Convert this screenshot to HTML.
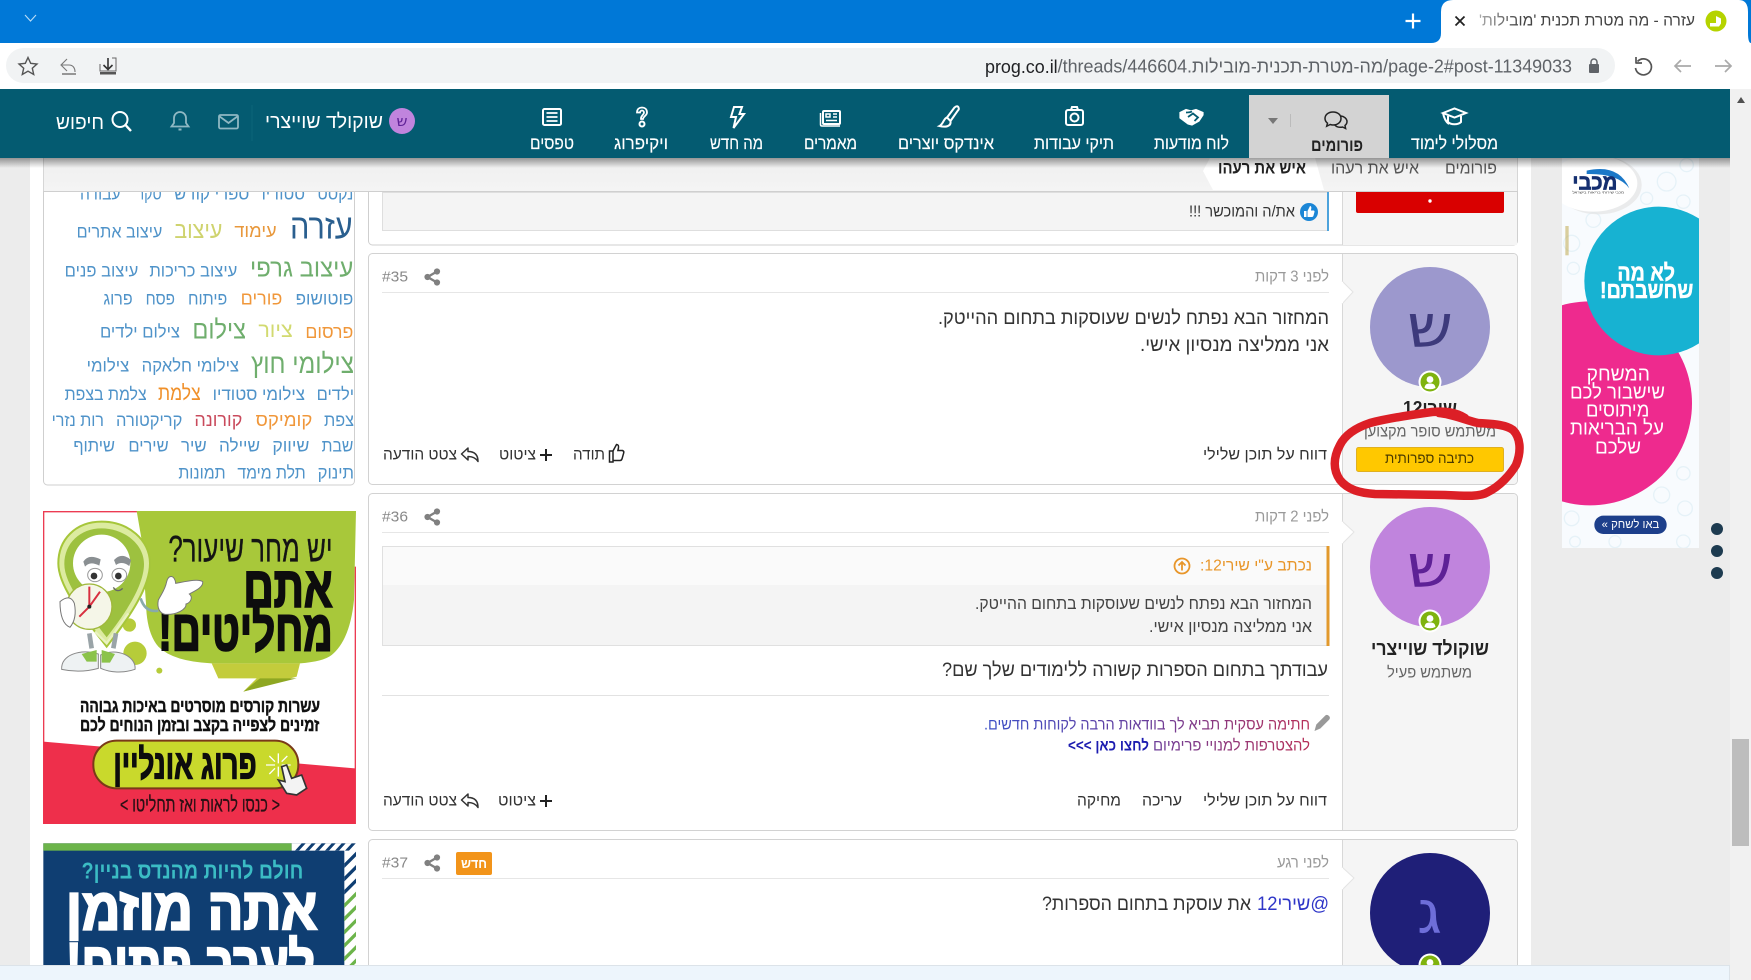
<!DOCTYPE html>
<html lang="he"><head><meta charset="utf-8"><title>עזרה - מה מטרת תכנית 'מובילות'</title>
<style>
html,body{margin:0;padding:0;width:1751px;height:980px;overflow:hidden;background:#ececec}
svg{display:block;position:absolute;left:0;top:0;filter:blur(.3px)}
text{font-family:"Liberation Sans","Noto Sans CJK JP",sans-serif;dominant-baseline:central;direction:rtl;unicode-bidi:embed}
text.l{direction:ltr}
text.d{font-family:"DejaVu Sans","Liberation Sans",sans-serif}
.tag text{fill:#4f93c9;font-size:52px}
.ac{font-size:16px;fill:#333}
</style></head><body>
<svg width="1751" height="980" viewBox="0 0 1751 980" xmlns="http://www.w3.org/2000/svg">
<defs>
<linearGradient id="sh" x1="0" y1="0" x2="0" y2="1"><stop offset="0" stop-color="#000" stop-opacity=".38"/><stop offset="1" stop-color="#000" stop-opacity="0"/></linearGradient>
<linearGradient id="sig" gradientUnits="userSpaceOnUse" x1="1310" y1="0" x2="984" y2="0"><stop offset="0" stop-color="#b83058"/><stop offset=".5" stop-color="#6a3f9c"/><stop offset="1" stop-color="#3c50c8"/></linearGradient>
<linearGradient id="bc" x1="0" y1="0" x2="0" y2="1"><stop offset="0" stop-color="#eeeeee"/><stop offset="1" stop-color="#f4f4f4"/></linearGradient>
<linearGradient id="fade" gradientUnits="userSpaceOnUse" x1="1695" y1="0" x2="1479" y2="0"><stop offset="0" stop-color="#444"/><stop offset=".8" stop-color="#444"/><stop offset="1" stop-color="#aaa"/></linearGradient>
<g id="share" fill="#808080" stroke="#808080"><circle cx="-4.500" cy="0" r="3.100" stroke="none"/><circle cx="5" cy="-5.500" r="3.100" stroke="none"/><circle cx="5" cy="5.500" r="3.100" stroke="none"/><path d="M-4.500 0L5-5.500M-4.500 0L5 5.500" stroke-width="2.400" fill="none"/></g>
<g id="online"><circle r="11.500" fill="#fff"/><circle r="9.500" fill="#7fb30f"/><circle cy="-2.500" r="3.400" fill="#fff"/><path d="M-5.500 6C-5 1.800-2.500 1.500 0 1.500S5 1.800 5.500 6Q0 8.500-5.500 6Z" fill="#fff"/></g>
<g id="reply" fill="none" stroke="#333" stroke-width="1.500" stroke-linejoin="round"><path d="M-8.500-1L-2-7V-3.500C4-3.500 8-1 8 6.500 5.500 2.500 2 1.500-2 1.500V5Z"/></g>
<g id="plus" stroke="#222" stroke-width="2"><path d="M-6 0H6M0-6V6"/></g>
<clipPath id="rightad"><rect x="1562" y="158" width="137" height="390"/></clipPath>
<clipPath id="ad2"><rect x="43" y="843" width="313" height="123"/></clipPath>
</defs>

<!-- page -->
<rect width="1751" height="980" fill="#ececec"/>
<rect x="30" y="150" width="1501" height="830" fill="#fff"/>

<!-- tag box -->
<rect x="43.500" y="150" width="311" height="335" rx="4" fill="#fff" stroke="#cfcfcf"/>
<g class="tag" transform="translate(30,160) scale(.33333)">
<text x="970" y="100" textLength="108" lengthAdjust="spacingAndGlyphs">נקסט</text>
<text x="825" y="100" textLength="130" lengthAdjust="spacingAndGlyphs">סטודיו</text>
<text x="658" y="100" textLength="226" lengthAdjust="spacingAndGlyphs">ספרי קודש</text>
<text x="395" y="100" textLength="75" lengthAdjust="spacingAndGlyphs">סקר</text>
<text x="272" y="100" textLength="122" lengthAdjust="spacingAndGlyphs">עבודה</text>

<text x="968" y="202" textLength="188" lengthAdjust="spacingAndGlyphs" style="font-size:104px;fill:#2a5f8f">עזרה</text>
<text x="740" y="212" textLength="127" lengthAdjust="spacingAndGlyphs" style="font-size:56px;fill:#e8983c">עימוד</text>
<text x="577" y="210" textLength="144" lengthAdjust="spacingAndGlyphs" style="font-size:70px;fill:#cfd36e">עיצוב</text>
<text x="397" y="214" textLength="257" lengthAdjust="spacingAndGlyphs">עיצוב אתרים</text>

<text x="970" y="326" textLength="310" lengthAdjust="spacingAndGlyphs" style="font-size:76px;fill:#6fae6d">עיצוב גרפי</text>
<text x="622" y="332" textLength="264" lengthAdjust="spacingAndGlyphs">עיצוב כריכות</text>
<text x="325" y="332" textLength="221" lengthAdjust="spacingAndGlyphs">עיצוב פנים</text>

<text x="970" y="416" textLength="173" lengthAdjust="spacingAndGlyphs">פוטושופ</text>
<text x="757" y="414" textLength="125" lengthAdjust="spacingAndGlyphs" style="font-size:56px;fill:#f0973a">פורים</text>
<text x="592" y="416" textLength="118" lengthAdjust="spacingAndGlyphs">פיתוח</text>
<text x="435" y="416" textLength="88" lengthAdjust="spacingAndGlyphs">פסח</text>
<text x="308" y="416" textLength="88" lengthAdjust="spacingAndGlyphs">פרוג</text>

<text x="970" y="514" textLength="144" lengthAdjust="spacingAndGlyphs" style="font-size:56px;fill:#f0973a">פרסום</text>
<text x="788" y="512" textLength="103" lengthAdjust="spacingAndGlyphs" style="font-size:62px;fill:#d2da70">ציור</text>
<text x="648" y="508" textLength="161" lengthAdjust="spacingAndGlyphs" style="font-size:78px;fill:#6fae6d">צילום</text>
<text x="450" y="514" textLength="240" lengthAdjust="spacingAndGlyphs">צילום ילדים</text>

<text x="972" y="610" textLength="309" lengthAdjust="spacingAndGlyphs" style="font-size:82px;fill:#6fae6d">צילומי חוץ</text>
<text x="627" y="616" textLength="292" lengthAdjust="spacingAndGlyphs">צילומי חלאקה</text>
<text x="298" y="616" textLength="128" lengthAdjust="spacingAndGlyphs">צילומי</text>

<text x="972" y="702" textLength="112" lengthAdjust="spacingAndGlyphs">ילדים</text>
<text x="825" y="702" textLength="277" lengthAdjust="spacingAndGlyphs">צילומי סטודיו</text>
<text x="512" y="700" textLength="128" lengthAdjust="spacingAndGlyphs" style="font-size:62px;fill:#f0902a">צלמת</text>
<text x="350" y="702" textLength="246" lengthAdjust="spacingAndGlyphs">צלמת בצפת</text>

<text x="972" y="780" textLength="90" lengthAdjust="spacingAndGlyphs">צפת</text>
<text x="847" y="778" textLength="170" lengthAdjust="spacingAndGlyphs" style="font-size:56px;fill:#f0973a">קומיקס</text>
<text x="637" y="778" textLength="144" lengthAdjust="spacingAndGlyphs" style="font-size:56px;fill:#c94a5c">קורונה</text>
<text x="457" y="780" textLength="199" lengthAdjust="spacingAndGlyphs">קריקטורה</text>
<text x="222" y="780" textLength="157" lengthAdjust="spacingAndGlyphs">רות נזרי</text>

<text x="970" y="856" textLength="95" lengthAdjust="spacingAndGlyphs">שבת</text>
<text x="838" y="856" textLength="111" lengthAdjust="spacingAndGlyphs">שיווק</text>
<text x="690" y="856" textLength="123" lengthAdjust="spacingAndGlyphs">שיילה</text>
<text x="530" y="856" textLength="77" lengthAdjust="spacingAndGlyphs">שיר</text>
<text x="416" y="856" textLength="121" lengthAdjust="spacingAndGlyphs">שירים</text>
<text x="255" y="856" textLength="125" lengthAdjust="spacingAndGlyphs">שיתוף</text>

<text x="972" y="938" textLength="109" lengthAdjust="spacingAndGlyphs">תינוק</text>
<text x="827" y="938" textLength="205" lengthAdjust="spacingAndGlyphs">תלת מימד</text>
<text x="587" y="938" textLength="142" lengthAdjust="spacingAndGlyphs">תמונות</text>
</g>

<!-- Ad 1 -->
<g transform="translate(30,500) scale(.33333)">
<rect x="40" y="33" width="938" height="939" fill="#fff"/>
<path d="M41 972V35H330M976 200V972" fill="none" stroke="#ec3b52" stroke-width="4"/>
<circle cx="315" cy="460" r="35" fill="#b6cc3a"/><circle cx="298" cy="375" r="20" fill="#b6cc3a"/><circle cx="388" cy="512" r="9" fill="#b6cc3a"/>
<path d="M320 33H978L972 300Q960 420 905 465 880 485 810 490L545 490Q430 485 385 440 350 400 348 310 345 270 335 120Z" fill="#a8c83a"/>
<path d="M545 490L810 490 800 530 640 575 680 535 565 535Z" fill="#c3cc3c"/>
<path d="M640 575L690 535H800Z" fill="#8ea722"/>
<text x="908" y="145" textLength="493" lengthAdjust="spacingAndGlyphs" font-size="112" fill="#141414" stroke="#141414" stroke-width="1">יש מחר שיעור?</text>
<text x="908" y="262" textLength="268" lengthAdjust="spacingAndGlyphs" font-size="172" font-weight="700" fill="#0d0d0d" stroke="#0d0d0d" stroke-width="6">אתם</text>
<text x="908" y="393" textLength="523" lengthAdjust="spacingAndGlyphs" font-size="172" font-weight="700" fill="#0d0d0d" stroke="#0d0d0d" stroke-width="6">מחליטים!</text>
<!-- pin character -->
<path d="M215 65C135 65 85 120 85 190 85 260 160 350 230 440 300 350 360 260 360 190 360 120 295 65 215 65Z" fill="#dcebA0" stroke="#a6c63a" stroke-width="6"/>
<path d="M215 85C150 85 103 130 103 192 103 255 172 335 230 412 290 335 342 255 342 192 342 130 280 85 215 85Z" fill="#9dc13f"/>
<circle cx="215" cy="190" r="86" fill="#fff"/>
<path d="M195 395L230 430 295 340" fill="none" stroke="#e9f2c0" stroke-width="7"/>
<path d="M160 185Q175 160 212 178L208 197Q180 182 165 200Z" fill="#8a8f92"/><path d="M252 180Q275 155 303 180L298 198Q275 182 258 195Z" fill="#8a8f92"/>
<ellipse cx="195" cy="225" rx="22" ry="20" fill="#fff" stroke="#999" stroke-width="3"/><ellipse cx="268" cy="225" rx="22" ry="20" fill="#fff" stroke="#999" stroke-width="3"/>
<circle cx="192" cy="228" r="10" fill="#333"/><circle cx="265" cy="228" r="10" fill="#333"/>
<path d="M250 262Q262 280 278 265" fill="none" stroke="#666" stroke-width="4"/>
<circle cx="178" cy="320" r="68" fill="#f5f6e8" stroke="#a0b83c" stroke-width="4"/>
<path d="M178 320V260M178 320L148 350M178 320L210 275" stroke="#d83040" stroke-width="6" fill="none"/><circle cx="178" cy="320" r="6" fill="#222"/>
<path d="M90 305Q120 280 133 310 142 355 120 382 90 370 90 305Z" fill="#fff" stroke="#777" stroke-width="3"/>
<path d="M178 400L185 445M258 400L250 445" stroke="#9aa4a8" stroke-width="14"/>
<path d="M95 508C92 465 150 445 205 462V505Q150 520 95 508Z" fill="#eef2f3" stroke="#888" stroke-width="3"/>
<path d="M212 465C260 440 320 470 315 508 280 520 240 518 212 505Z" fill="#eef2f3" stroke="#888" stroke-width="3"/>
<path d="M155 462L200 450V485H170ZM215 450L255 462 240 488H215Z" fill="#8bc34a"/>
<path d="M332 295Q345 338 385 332" fill="none" stroke="#8aa" stroke-width="8"/>
<path d="M385 300C395 280 405 270 410 245 415 222 435 225 437 250 465 245 505 235 518 245 522 262 490 275 478 282 490 292 482 308 468 312 470 328 440 345 405 343 390 340 380 325 385 300Z" fill="#fff" stroke="#777" stroke-width="3"/>
<text x="870" y="618" textLength="720" lengthAdjust="spacingAndGlyphs" font-size="54" font-weight="700" fill="#111" stroke="#111" stroke-width="1.500">עשרות קורסים מוסרטים באיכות גבוהה</text>
<text x="868" y="675" textLength="718" lengthAdjust="spacingAndGlyphs" font-size="54" font-weight="700" fill="#111" stroke="#111" stroke-width="1.500">זמינים לצפייה בקצב ובזמן הנוחים לכם</text>
<path d="M40 725L975 805V972H40Z" fill="#ee2f4b"/>
<rect x="190" y="722" width="615" height="143" rx="70" fill="#c9d92c" stroke="#7a3a18" stroke-width="6"/>
<text x="680" y="793" textLength="430" lengthAdjust="spacingAndGlyphs" font-size="124" font-weight="700" fill="#0d0d0d" stroke="#0d0d0d" stroke-width="4">פרוג אונליין</text>
<path d="M745 790V760M745 800V830M735 795H708M755 795H782M735 785L718 768M755 785L772 768M735 805L718 822" stroke="#fff" stroke-width="4"/>
<path d="M755 800L770 795 785 835 815 825 830 865 800 885 770 880 745 840 765 845Z" fill="#f3f3f3" stroke="#333" stroke-width="5"/>
<text x="750" y="915" textLength="480" lengthAdjust="spacingAndGlyphs" font-size="62" fill="#2a1014" stroke="#2a1014" stroke-width="1">&lt; כנסו לראות ואז תחליטו &gt;</text>
</g>

<!-- Ad 2 -->
<g clip-path="url(#ad2)">
<g transform="translate(30,500) scale(.33333)">
<rect x="40" y="1030" width="938" height="400" fill="#0f3e72"/>
<rect x="40" y="1030" width="745" height="22" fill="#6cb44a"/>
<rect x="785" y="1030" width="193" height="22" fill="#fff"/>
<rect x="943" y="1030" width="35" height="400" fill="#fff"/>
<path d="M795 1052l20-22h12l-20 22zM825 1052l20-22h12l-20 22zM855 1052l20-22h12l-20 22zM885 1052l20-22h12l-20 22zM915 1052l20-22h12l-20 22zM945 1052l20-22h12l-20 22z" fill="#0f3e72"/>
<path d="M943 1090l35-35v14l-35 35zM943 1130l35-35v14l-35 35zM943 1170l35-35v14l-35 35z" fill="#0f3e72"/>
<path d="M943 1210l35-35v14l-35 35zM943 1250l35-35v14l-35 35zM943 1290l35-35v14l-35 35zM943 1330l35-35v14l-35 35zM943 1370l35-35v14l-35 35zM943 1410l35-35v14l-35 35z" fill="#6cb44a"/>
<text x="820" y="1112" textLength="665" lengthAdjust="spacingAndGlyphs" font-size="70" font-weight="700" fill="#3bbcc4">חולם להיות מהנדס בניין?</text>
<text x="862" y="1228" textLength="754" lengthAdjust="spacingAndGlyphs" font-size="176" font-weight="700" fill="#fff" stroke="#fff" stroke-width="7">אתה מוזמן</text>
<text x="855" y="1392" textLength="747" lengthAdjust="spacingAndGlyphs" font-size="176" font-weight="700" fill="#fff" stroke="#fff" stroke-width="7">לערב פתוח!</text>
</g></g>

<!-- Post 34 -->
<rect x="368.500" y="150" width="1149" height="95" rx="4" fill="#fff" stroke="#cfcfcf"/>
<rect x="1342" y="151" width="175" height="94" fill="#f5f5f5"/><path d="M1342.500 151V245" stroke="#d8d8d8"/>
<rect x="382.500" y="192.500" width="945" height="38" fill="#f4f4f4" stroke="#dedede"/>
<rect x="1327" y="192" width="2" height="39" fill="#4da3dc"/>
<circle cx="1309" cy="212" r="9" fill="#1b86d6"/><path d="M1304 211h2.500v6h-2.500zM1307.500 211l2.500-5q1.800.3 1.200 3l-.3 1.500h2.800q1.200.5.700 1.800l-1 3.700q-.4 1-1.500 1h-4.400z" fill="#fff"/>
<text x="1295" y="212" textLength="106" lengthAdjust="spacingAndGlyphs" font-size="15.500" fill="#333">את/ה והמוכשר !!!</text>
<rect x="1356" y="180" width="148" height="33" rx="2" fill="#d90000"/><circle cx="1430" cy="201" r="1.700" fill="#fff"/>

<!-- Post 35 -->
<rect x="368.500" y="253.500" width="1149" height="231" rx="4" fill="#fff" stroke="#d2d2d2"/>
<path d="M1342 254H1513a4 4 0 0 1 4 4V480a4 4 0 0 1-4 4H1342Z" fill="#f5f5f5"/><path d="M1342.500 254V484" stroke="#d8d8d8"/>
<path d="M1342 281L1353 292 1342 304" fill="#fff" stroke="#e4e4e4"/><path d="M1341 282H1343V303H1341Z" fill="#fff"/>
<text class="l" x="382" y="277" textLength="26" lengthAdjust="spacingAndGlyphs" font-size="15" fill="#888">#35</text>
<use href="#share" x="432" y="277"/>
<text x="1329" y="277" textLength="74" lengthAdjust="spacingAndGlyphs" font-size="15.500" fill="#999">לפני 3 דקות</text>
<path d="M382 292.500H1329" stroke="#e6e6e6"/>
<text x="1329" y="318" textLength="391" lengthAdjust="spacingAndGlyphs" font-size="19.500" fill="#333">המחזור הבא נפתח לנשים שעוסקות בתחום ההייטק.</text>
<text x="1329" y="345" textLength="189" lengthAdjust="spacingAndGlyphs" font-size="19.500" fill="#333">אני ממליצה מנסיון אישי.</text>
<text class="ac" x="1327" y="455" textLength="124" lengthAdjust="spacingAndGlyphs">דווח על תוכן שלילי</text>
<g transform="translate(0,2.500)"><path d="M609.500 448.500h3.500v11h-3.500zM613 448.500l3.500-6.500q2.500.2 2 3.200l-.6 2.800h4.600q1.700.7 1.200 2.400l-1.700 6q-.5 1.600-2 1.600h-7z" fill="none" stroke="#222" stroke-width="1.500"/></g>
<text class="ac" x="605" y="455" textLength="32" lengthAdjust="spacingAndGlyphs">תודה</text>
<use href="#plus" x="546" y="455"/>
<text class="ac" x="536" y="455" textLength="37" lengthAdjust="spacingAndGlyphs">ציטוט</text>
<use href="#reply" x="470" y="455"/>
<text class="ac" x="457" y="455" textLength="74" lengthAdjust="spacingAndGlyphs">צטט הודעה</text>
<circle cx="1430" cy="327" r="60" fill="#9c98cd"/>
<text class="d" x="1453" y="327" textLength="46" lengthAdjust="spacingAndGlyphs" font-size="60" fill="#3d3a7c">ש</text>
<use href="#online" x="1430" y="382"/>
<text x="1457" y="408" textLength="54" lengthAdjust="spacingAndGlyphs" font-size="18" font-weight="700" fill="#222">שירי12</text>
<text x="1496" y="432" textLength="132" lengthAdjust="spacingAndGlyphs" font-size="16" fill="#666">משתמש סופר מקצוען</text>
<rect x="1356.500" y="447.500" width="147" height="24" rx="2" fill="#ffc800" stroke="#e0b020"/>
<text x="1474" y="459" textLength="89" lengthAdjust="spacingAndGlyphs" font-size="14.500" fill="#4a3a00">כתיבה ספרותית</text>

<!-- Post 36 -->
<rect x="368.500" y="493.500" width="1149" height="337" rx="4" fill="#fff" stroke="#d2d2d2"/>
<path d="M1342 494H1513a4 4 0 0 1 4 4V826a4 4 0 0 1-4 4H1342Z" fill="#f5f5f5"/><path d="M1342.500 494V830" stroke="#d8d8d8"/>
<path d="M1342 521L1354 532 1342 544" fill="#fff" stroke="#e4e4e4"/><path d="M1341 522H1343V543H1341Z" fill="#fff"/>
<text class="l" x="382" y="517" textLength="26" lengthAdjust="spacingAndGlyphs" font-size="15" fill="#888">#36</text>
<use href="#share" x="432" y="517"/>
<text x="1329" y="517" textLength="74" lengthAdjust="spacingAndGlyphs" font-size="15.500" fill="#999">לפני 2 דקות</text>
<path d="M382 532.500H1329" stroke="#e6e6e6"/>
<rect x="382.500" y="546.500" width="945" height="99" fill="#f4f4f4" stroke="#e0e0e0"/>
<rect x="383" y="547" width="944" height="38" fill="#fafafa"/>
<rect x="1326.500" y="546" width="3" height="100" fill="#e2992c"/>
<text x="1312" y="566" textLength="112" lengthAdjust="spacingAndGlyphs" font-size="16" fill="#e8962a">נכתב ע"י שירי12:</text>
<circle cx="1182" cy="566" r="7.500" fill="none" stroke="#e8962a" stroke-width="1.800"/><path d="M1182 570.500V562M1178.500 565.500L1182 562 1185.500 565.500" fill="none" stroke="#e8962a" stroke-width="1.800"/>
<text x="1312" y="604" textLength="337" lengthAdjust="spacingAndGlyphs" font-size="16.500" fill="#444">המחזור הבא נפתח לנשים שעוסקות בתחום ההייטק.</text>
<text x="1312" y="627" textLength="163" lengthAdjust="spacingAndGlyphs" font-size="16.500" fill="#444">אני ממליצה מנסיון אישי.</text>
<text x="1328" y="670" textLength="386" lengthAdjust="spacingAndGlyphs" font-size="19.500" fill="#333">עבודתך בתחום הספרות קשורה ללימודים שלך שם?</text>
<path d="M382 695.500H1329" stroke="#e2e2e2"/>
<path d="M1314.500 731l1.800-6.500 9-9q1.800-1.300 3.600.4t.4 3.600l-9 9z" fill="#999"/>
<text x="1310" y="725" textLength="326" lengthAdjust="spacingAndGlyphs" font-size="15.500" fill="url(#sig)">חתימה עסקית תביא לך בוודאות הרבה לקוחות חדשים.</text>
<text x="1310" y="746" textLength="157" lengthAdjust="spacingAndGlyphs" font-size="15.500" fill="url(#sig)">להצטרפות למנויי פרימיום</text>
<text x="1149" y="746" textLength="81" lengthAdjust="spacingAndGlyphs" font-size="15.500" font-weight="700" fill="#1c1cb0">לחצו כאן &gt;&gt;&gt;</text>
<text class="ac" x="1327" y="801" textLength="124" lengthAdjust="spacingAndGlyphs">דווח על תוכן שלילי</text>
<text class="ac" x="1182" y="801" textLength="40" lengthAdjust="spacingAndGlyphs">עריכה</text>
<text class="ac" x="1121" y="801" textLength="44" lengthAdjust="spacingAndGlyphs">מחיקה</text>
<use href="#plus" x="546" y="801"/>
<text class="ac" x="536" y="801" textLength="38" lengthAdjust="spacingAndGlyphs">ציטוט</text>
<use href="#reply" x="470" y="801"/>
<text class="ac" x="457" y="801" textLength="74" lengthAdjust="spacingAndGlyphs">צטט הודעה</text>
<circle cx="1430" cy="567" r="60" fill="#c084dd"/>
<text class="d" x="1453" y="567" textLength="46" lengthAdjust="spacingAndGlyphs" font-size="60" fill="#5e2196">ש</text>
<use href="#online" x="1430" y="621"/>
<text x="1489" y="649" textLength="118" lengthAdjust="spacingAndGlyphs" font-size="19.500" font-weight="700" fill="#222">שוקולד שוייצרי</text>
<text x="1472" y="673" textLength="85" lengthAdjust="spacingAndGlyphs" font-size="15.500" fill="#666">משתמש פעיל</text>

<!-- Post 37 -->
<rect x="368.500" y="839.500" width="1149" height="160" rx="4" fill="#fff" stroke="#d2d2d2"/>
<path d="M1342 840H1513a4 4 0 0 1 4 4V990H1342Z" fill="#f5f5f5"/><path d="M1342.500 840V990" stroke="#d8d8d8"/>
<path d="M1342 867L1354 878 1342 890" fill="#fff" stroke="#e4e4e4"/><path d="M1341 868H1343V889H1341Z" fill="#fff"/>
<text class="l" x="382" y="863" textLength="26" lengthAdjust="spacingAndGlyphs" font-size="15" fill="#888">#37</text>
<use href="#share" x="432" y="863"/>
<rect x="456" y="852" width="36" height="23" rx="2" fill="#f2941a"/>
<text x="487" y="863.500" textLength="26" lengthAdjust="spacingAndGlyphs" font-size="13.500" font-weight="700" fill="#fff">חדש</text>
<text x="1329" y="863" textLength="52" lengthAdjust="spacingAndGlyphs" font-size="15.500" fill="#999">לפני רגע</text>
<path d="M382 878.500H1329" stroke="#e6e6e6"/>
<text x="1329" y="904" textLength="72" lengthAdjust="spacingAndGlyphs" font-size="19.500" fill="#2f36c8">@שירי12</text>
<text x="1251" y="904" textLength="209" lengthAdjust="spacingAndGlyphs" font-size="19.500" fill="#333">את עוסקת בתחום הספרות?</text>
<circle cx="1430" cy="913" r="60" fill="#1f1f78"/>
<text class="d" x="1442" y="913" textLength="25" lengthAdjust="spacingAndGlyphs" font-size="60" fill="#6e6ed9">ג</text>
<use href="#online" x="1430" y="965"/>

<!-- Right ad -->
<g clip-path="url(#rightad)">
<g transform="translate(1540,140) scale(.33333)">
<rect x="65" y="54" width="412" height="1170" fill="#f8fbfe"/>
<g fill="none" stroke="#e6f2f8" stroke-width="4"><circle cx="430" cy="185" r="20"/><circle cx="380" cy="125" r="28"/><circle cx="440" cy="75" r="20"/><circle cx="320" cy="175" r="18"/><circle cx="160" cy="240" r="22"/><circle cx="95" cy="310" r="24"/><circle cx="100" cy="385" r="18"/><circle cx="430" cy="1000" r="20"/><circle cx="365" cy="1065" r="24"/><circle cx="435" cy="1105" r="22"/><circle cx="95" cy="1135" r="22"/><circle cx="225" cy="1205" r="18"/><circle cx="430" cy="1205" r="20"/><circle cx="105" cy="1205" r="16"/></g>
<ellipse cx="175" cy="135" rx="130" ry="88" fill="#e4e4e4" opacity=".7"/>
<ellipse cx="160" cy="130" rx="132" ry="85" fill="#fff"/>
<path d="M140 92Q235 70 268 145 235 100 140 102Z" fill="#1b78c8"/>
<text x="232" y="127" textLength="135" lengthAdjust="spacingAndGlyphs" font-size="64" font-weight="700" fill="#152f70" stroke="#152f70" stroke-width="2">מכבי</text>
<text x="252" y="158" textLength="155" lengthAdjust="spacingAndGlyphs" font-size="11" fill="#333">מכבי שירותי בריאות בישראל</text>
<circle cx="150" cy="790" r="306" fill="#ee2a8e"/>
<circle cx="356" cy="423" r="223" fill="#17b2d2"/>
<rect x="76" y="258" width="10" height="88" fill="#b9a23c" opacity=".5"/>
<text x="405" y="398" textLength="173" lengthAdjust="spacingAndGlyphs" font-size="70" font-weight="700" fill="#fff" stroke="#fff" stroke-width="1.500">לא מה</text>
<text x="460" y="450" textLength="280" lengthAdjust="spacingAndGlyphs" font-size="70" font-weight="700" fill="#fff" stroke="#fff" stroke-width="1.500">שחשבתם!</text>
<g font-size="60" fill="#fff">
<text x="330" y="703" textLength="190" lengthAdjust="spacingAndGlyphs">המשחק</text>
<text x="375" y="757" textLength="285" lengthAdjust="spacingAndGlyphs">שישבור לכם</text>
<text x="328" y="812" textLength="190" lengthAdjust="spacingAndGlyphs">מיתוסים</text>
<text x="372" y="866" textLength="282" lengthAdjust="spacingAndGlyphs">על הבריאות</text>
<text x="303" y="922" textLength="138" lengthAdjust="spacingAndGlyphs">שלכם</text>
</g>
<rect x="163" y="1127" width="217" height="55" rx="27" fill="#1d3f8b"/>
<text x="358" y="1155" textLength="173" lengthAdjust="spacingAndGlyphs" font-size="34" fill="#fff">באו לשחק »</text>
</g></g>
<circle cx="1717" cy="529" r="6" fill="#1d3b50"/><circle cx="1717" cy="551" r="6" fill="#1d3b50"/><circle cx="1717" cy="573" r="6" fill="#1d3b50"/>

<!-- Red hand-drawn ellipse -->
<path d="M1465 418C1455 412 1445 411 1432 412 1410 415 1385 419 1370 423 1355 428 1345 435 1340 445 1333 458 1333 470 1340 480 1348 490 1360 493 1375 494L1445 495C1465 496 1480 497 1488 492 1500 486 1510 475 1516 465 1522 450 1520 437 1513 430 1505 424 1490 424 1478 423 1465 420 1452 414 1439 413" fill="none" stroke="#dc1f26" stroke-width="8.500" stroke-linecap="round"/>

<!-- breadcrumb -->
<rect x="43" y="150" width="1474.500" height="41" fill="url(#bc)"/>
<path d="M43 191.500H1517.500" stroke="#cfcfcf"/>
<path d="M1517.500 150V191" stroke="#d6d6d6"/><path d="M43.500 150V191" stroke="#d6d6d6"/>
<path d="M1210 158H1315L1324 190H1213L1203 171Z" fill="#fff"/>
<text x="1497" y="168" textLength="52" lengthAdjust="spacingAndGlyphs" font-size="17" fill="#555">פורומים</text>
<text x="1419" y="168" textLength="88" lengthAdjust="spacingAndGlyphs" font-size="17" fill="#555">איש את רעהו</text>
<text x="1306" y="168" textLength="88" lengthAdjust="spacingAndGlyphs" font-size="17" font-weight="700" fill="#222">איש את רעהו</text>

<!-- nav shadow -->
<rect x="0" y="158" width="1730" height="10" fill="url(#sh)"/>

<!-- nav -->
<rect x="0" y="89" width="1730" height="69" fill="#045b71"/>
<g fill="#fff" font-size="17.500" stroke="#fff" stroke-width=".15">
<text x="1498" y="143" textLength="87" lengthAdjust="spacingAndGlyphs">מסלולי לימוד</text>
<text x="1229" y="143" textLength="75" lengthAdjust="spacingAndGlyphs">לוח מודעות</text>
<text x="1114" y="143" textLength="80" lengthAdjust="spacingAndGlyphs">תיקי עבודות</text>
<text x="994" y="143" textLength="96" lengthAdjust="spacingAndGlyphs">אינדקס יוצרים</text>
<text x="857" y="143" textLength="53" lengthAdjust="spacingAndGlyphs">מאמרים</text>
<text x="763" y="143" textLength="53" lengthAdjust="spacingAndGlyphs">מה חדש</text>
<text x="668" y="143" textLength="54" lengthAdjust="spacingAndGlyphs">ויקיפרוג</text>
<text x="574" y="143" textLength="44" lengthAdjust="spacingAndGlyphs">טפסים</text>
</g>
<rect x="1249" y="95" width="140" height="63" fill="#d3d3d3"/>
<text x="1363" y="145" textLength="52" lengthAdjust="spacingAndGlyphs" font-size="17.500" font-weight="700" fill="#222">פורומים</text>
<path d="M1268 118h10l-5 6z" fill="#777"/><path d="M1290.500 114V127" stroke="#bbb"/>
<g fill="none" stroke="#222" stroke-width="1.500"><path d="M1333 112c-5 0-8 3-8 6.500 0 2 1 3.500 2.500 4.700l-.8 3 3.500-1.700q1.400.5 2.800.5c5 0 8-3 8-6.500s-3-6.500-8-6.500z"/><path d="M1341 116c3 .3 6 2.600 6 5.500 0 1.700-.8 3-2 4l.6 3-3-1.500q-1 .3-2.200.3-3.500 0-5.500-2.200"/></g>
<!-- nav icons -->
<g fill="none" stroke="#fff" stroke-width="2">
<!-- graduation cap -->
<path d="M1443 113L1454.500 108.500 1466 113 1454.500 117.500Z"/><path d="M1448 116V122C1451 125 1458 125 1461 122V116"/><path d="M1443 113C1444 118 1446 122 1449 124"/>
<!-- handshake -->
<path d="M1180 112.500l6-3 5 1.500 5-1.500 7 3v2.500l-4 6-7 4-4-1-8-6z" fill="#fff" stroke-width="1.200"/><path d="M1188 117l5-3.500 5 4-3.500 3.500M1186 112.500q4 0 6-1" stroke="#045b71" stroke-width="1.800"/>
<!-- portfolio camera -->
<rect x="1066" y="110" width="17" height="15" rx="2"/><path d="M1071 110l1-3h5l1 3"/><circle cx="1074.500" cy="117.500" r="4"/>
<!-- brush -->
<path d="M947 117.500L954.500 107.500Q957.500 105 958.500 107.500 959.500 109 957.500 111L950.500 121"/><path d="M947 117.500C943.500 118.500 943.500 124 939.500 126 945.500 127.500 951.500 126.500 950.500 121Z"/>
<!-- newspaper -->
<rect x="823" y="111" width="17" height="13" rx="1"/><path d="M820.500 113V124.500Q820.500 126 822 126H840" stroke-width="1.500"/><path d="M826 114h4v3h-4zM833 114h4M833 117h4M826 120.500h11" stroke-width="1.500"/>
<!-- bolt -->
<path d="M734 107H742L739.500 114H744L733.500 128 736 117H731Z"/>
<!-- question -->
<path d="M637 112.500C637 109 639.500 107.500 642 107.500S647 109 647 112.500C647 115.500 643.500 116 643 119H641C640.500 115.500 644 115 644 112.500 644 111.500 643 110.500 642 110.500S640 111.500 640 112.500Z" stroke-width="1.800"/><circle cx="642" cy="124" r="2.500"/>
<!-- list -->
<rect x="543" y="109" width="18" height="16" rx="1.500"/><path d="M546.500 113h11M546.500 117h11M546.500 121h11" stroke-width="1.800"/>
</g>
<rect x="251.500" y="105" width="1" height="36" fill="#0d6579"/>
<!-- user nav -->
<circle cx="402" cy="121" r="13" fill="#c084dd"/><text class="d" x="407.500" y="121" textLength="11" lengthAdjust="spacingAndGlyphs" font-size="15" fill="#5e2196">ש</text>
<text x="383" y="122" textLength="118" lengthAdjust="spacingAndGlyphs" font-size="20" fill="#fff">שוקולד שוייצרי</text>
<g fill="none" stroke="#8fb8c3" stroke-width="1.800">
<rect x="219" y="115" width="19" height="13.500" rx="1.500"/><path d="M219 116L228.500 123 238 116"/>
<path d="M171.500 126.500H188.500L186 123V118A6 6 0 0 0 174 118V123Z"/><path d="M178.500 129.500H181.500" stroke-width="2"/>
</g>
<circle cx="120" cy="119.500" r="7.500" fill="none" stroke="#fff" stroke-width="2"/><path d="M125.500 125L131 131" stroke="#fff" stroke-width="2.400"/>
<text x="104" y="123" textLength="48" lengthAdjust="spacingAndGlyphs" font-size="20" fill="#fff">חיפוש</text>

<!-- address band -->
<rect x="0" y="43" width="1751" height="46" fill="#fff"/>
<rect x="6" y="48" width="1609" height="35" rx="17.500" fill="#f1f3f4"/>
<text class="l" x="985" y="66" textLength="587" lengthAdjust="spacingAndGlyphs" font-size="18.500" fill="#5f6368"><tspan fill="#202124">prog.co.il</tspan>/threads/446604.מה-מטרת-תכנית-מובילות/page-2#post-11349033</text>
<rect x="1589" y="64" width="10" height="9" rx="1" fill="#5f6368"/><path d="M1591 64V62a3 3 0 0 1 6 0V64" fill="none" stroke="#5f6368" stroke-width="1.500"/>
<g fill="none" stroke="#444" stroke-width="1.500">
<path d="M28 57.500L30.700 63.300 37 64 32.300 68.200 33.700 74.500 28 71.200 22.300 74.500 23.700 68.200 19 64 25.300 63.300Z" stroke-width="1.400" stroke="#555"/>
<path d="M67 59L61 65 67 71M62 65H69C73 65 75 68 75 72" stroke-width="1.100" stroke="#777"/><path d="M62 74H76" stroke="#777"/>
<path d="M108 58V69M103.500 65L108 69.500 112.500 65" stroke="#333" stroke-width="1.600"/><path d="M112 58H116V71H100V64" stroke-width="1" stroke="#666"/><rect x="100" y="72" width="16" height="2.500" fill="#555" stroke="none"/>
<path d="M1637.500 61.500A8 8 0 1 1 1635.500 68" stroke-width="1.700" stroke="#555"/><path d="M1636 57V63H1642" stroke-width="1.700" stroke="#555" stroke-linejoin="round"/>
<path d="M1691 66H1675M1681 60L1675 66 1681 72" stroke="#aaa" stroke-width="1.700"/>
<path d="M1715 66H1731M1725 60L1731 66 1725 72" stroke="#aaa" stroke-width="1.700"/>
</g>

<!-- tab strip -->
<rect x="0" y="0" width="1751" height="43" fill="#0078d7"/>
<path d="M25 15L30.500 21 36 15" fill="none" stroke="#b9dcf6" stroke-width="1.100"/>
<path d="M1413 13.500V28.500M1405.500 21H1420.500" stroke="#fff" stroke-width="2.200"/>
<path d="M1431 43Q1441 43 1441 33V12Q1441 0 1453 0H1739Q1748 0 1748 12V33Q1748 43 1751 43V43Z" fill="#fff"/>
<path d="M1455.500 16.500L1464.500 25.500M1464.500 16.500L1455.500 25.500" stroke="#222" stroke-width="1.800"/>
<text x="1695" y="21" textLength="216" lengthAdjust="spacingAndGlyphs" font-size="16" fill="url(#fade)">עזרה - מה מטרת תכנית 'מובילות'</text>
<circle cx="1716" cy="21" r="10.500" fill="#b5d300"/><path d="M1710 23h6v-7l5 2.500v5l-2 3h-9z" fill="#fff"/>

<!-- bottom bar & scrollbar -->
<rect x="0" y="966" width="1729" height="14" fill="#edf5fc"/><path d="M0 965.500H1729.500V980" fill="none" stroke="#dce3e9"/>
<rect x="1730" y="89" width="21" height="891" fill="#f1f1f1"/>
<path d="M1737 103L1741 97 1745 103Z" fill="#505050"/>
<rect x="1732" y="739" width="17" height="107" fill="#bdbdbd"/>
</svg>
</body></html>
